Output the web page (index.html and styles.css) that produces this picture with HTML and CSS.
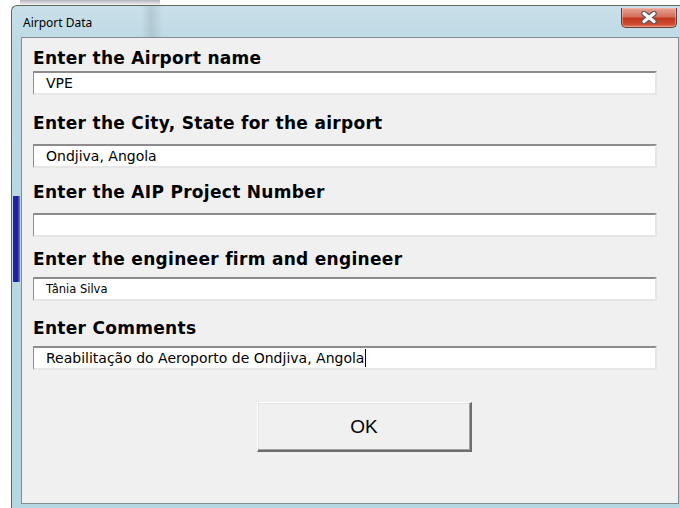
FILE: index.html
```html
<!DOCTYPE html>
<html lang="en">
<head>
<meta charset="utf-8">
<title>Airport Data</title>
<link rel="stylesheet" href="styles.css">
</head>
<body>
<div class="desktop">
  <div class="window">
    <div class="frame-tint"></div>
    <div class="titlebar">
      <span class="title">Airport Data</span>
      <button class="close" type="button" aria-label="Close">
        <svg width="22" height="13" viewBox="0 0 22 13">
          <path d="M6 2.5 L16 10.5 M16 2.5 L6 10.5" stroke="#5a5a5a" stroke-width="5.5" stroke-linecap="round"/>
          <path d="M6 2.5 L16 10.5 M16 2.5 L6 10.5" stroke="#ffffff" stroke-width="3.2" stroke-linecap="round"/>
        </svg>
      </button>
    </div>
    <div class="client">
      <form class="form">
        <div class="field">
          <label class="label">Enter the Airport name</label>
          <div class="textbox"><span class="value">VPE</span></div>
        </div>
        <div class="field">
          <label class="label">Enter the City, State for the airport</label>
          <div class="textbox"><span class="value">Ondjiva, Angola</span></div>
        </div>
        <div class="field">
          <label class="label">Enter the AIP Project Number</label>
          <div class="textbox"><span class="value"></span></div>
        </div>
        <div class="field">
          <label class="label">Enter the engineer firm and engineer</label>
          <div class="textbox"><span class="value value--small">Tânia Silva</span></div>
        </div>
        <div class="field">
          <label class="label">Enter Comments</label>
          <div class="textbox"><span class="value">Reabilitação do Aeroporto de Ondjiva, Angola</span><span class="caret"></span></div>
        </div>
      </form>
      <div class="actions">
        <button class="ok" type="button">OK</button>
      </div>
    </div>
  </div>
</div>
</body>
</html>
```
FILE: styles.css
```css
html, body {
  margin: 0;
  padding: 0;
  background: #ffffff;
}

.desktop {
  width: 680px;
  height: 508px;
  overflow: hidden;
  position: relative;
  background:
    linear-gradient(180deg, rgba(40, 40, 70, 0.35) 0, rgba(40, 40, 70, 0) 6px) no-repeat 20px 0 / 140px 6px,
    #ffffff;
}

/* Aero style window frame */
.window {
  position: relative;
  margin: 5px 0 0 11px;
  width: 675px;
  border: 1px solid #5f6a60;
  border-right: none;
  border-radius: 6px 0 0 0;
  padding: 0 8px 6px 9px;
  background: linear-gradient(180deg, #c9e0ea 0, #bcd9e4 40px, #b6d6e1 100%);
  box-sizing: border-box;
}

/* blue of whatever sits behind the glass on the left edge */
.frame-tint {
  position: absolute;
  left: 1px;
  top: 190px;
  width: 7px;
  height: 86px;
  background: linear-gradient(90deg, #2a2aa8, #1a1a9c 60%, #6f7fc4);
  filter: blur(0.6px);
}

.titlebar {
  height: 31px;
  display: flex;
  justify-content: space-between;
  align-items: flex-start;
  background: linear-gradient(90deg, rgba(255,255,255,0) 0, rgba(255,255,255,0) 120px, rgba(120,140,150,0.25) 130px, rgba(255,255,255,0) 142px);
}

.title {
  margin: 9px 0 0 2px;
  font-family: "Noto Sans", "DejaVu Sans", sans-serif;
  font-size: 12px;
  line-height: 16px;
  color: #000000;
}

.close {
  margin: 2px 1px 0 0;
  width: 56px;
  height: 20px;
  padding: 0;
  border: 1px solid #6b3a30;
  border-top: none;
  border-radius: 0 0 5px 5px;
  background: linear-gradient(180deg, #e9a596 0, #d6705e 45%, #c2361f 55%, #cf4a30 85%, #e07a5c 100%);
  display: flex;
  align-items: center;
  justify-content: center;
  box-shadow: inset 0 0 0 1px rgba(255, 200, 190, 0.45);
}

.close svg {
  display: block;
}

.client {
  width: 658px;
  height: 467px;
  box-sizing: border-box;
  border: 1px solid #7f8c90;
  background: #f0f0f0;
  padding: 10px 0 0 11px;
}

.form {
  display: flex;
  flex-direction: column;
}

.label {
  display: block;
  font-family: "DejaVu Sans", sans-serif;
  font-weight: bold;
  font-size: 17px;
  letter-spacing: 0.3px;
  line-height: 20px;
  color: #000000;
  margin-bottom: 3px;
}

.field:nth-child(2) { margin-top: 18px; }
.field:nth-child(2) .label { margin-bottom: 11px; }
.field:nth-child(3) { margin-top: 14px; }
.field:nth-child(3) .label { margin-bottom: 11px; }
.field:nth-child(4) { margin-top: 12px; }
.field:nth-child(4) .label { margin-bottom: 8px; }
.field:nth-child(5) { margin-top: 17px; }
.field:nth-child(5) .label { margin-bottom: 8px; }

/* sunken edit box */
.textbox {
  width: 624px;
  height: 24px;
  box-sizing: border-box;
  background: #ffffff;
  border-top: 2px solid #8c8c8c;
  border-left: 1px solid #8c8c8c;
  border-right: 2px solid #e6e6e6;
  border-bottom: 2px solid #e6e6e6;
  display: flex;
  align-items: center;
  padding-left: 12px;
}

.value {
  font-family: "DejaVu Sans", sans-serif;
  font-size: 14px;
  line-height: 18px;
  color: #000000;
  white-space: nowrap;
}

.value--small {
  font-size: 11.5px;
}

.caret {
  width: 1px;
  height: 18px;
  background: #000000;
  margin-left: 1px;
}

.actions {
  margin-top: 32px;
  padding-left: 224px;
}

/* raised push button */
.ok {
  width: 215px;
  height: 50px;
  box-sizing: border-box;
  background: #f0f0f0;
  border-top: 1px solid #ffffff;
  border-left: 1px solid #ffffff;
  border-right: 2px solid #6e6e6e;
  border-bottom: 2px solid #6e6e6e;
  box-shadow: inset -1px -1px 0 #a0a0a0, inset 1px 1px 0 #e3e3e3;
  font-family: "Liberation Sans", Arial, sans-serif;
  font-size: 19px;
  color: #000000;
  padding: 0;
}
```
